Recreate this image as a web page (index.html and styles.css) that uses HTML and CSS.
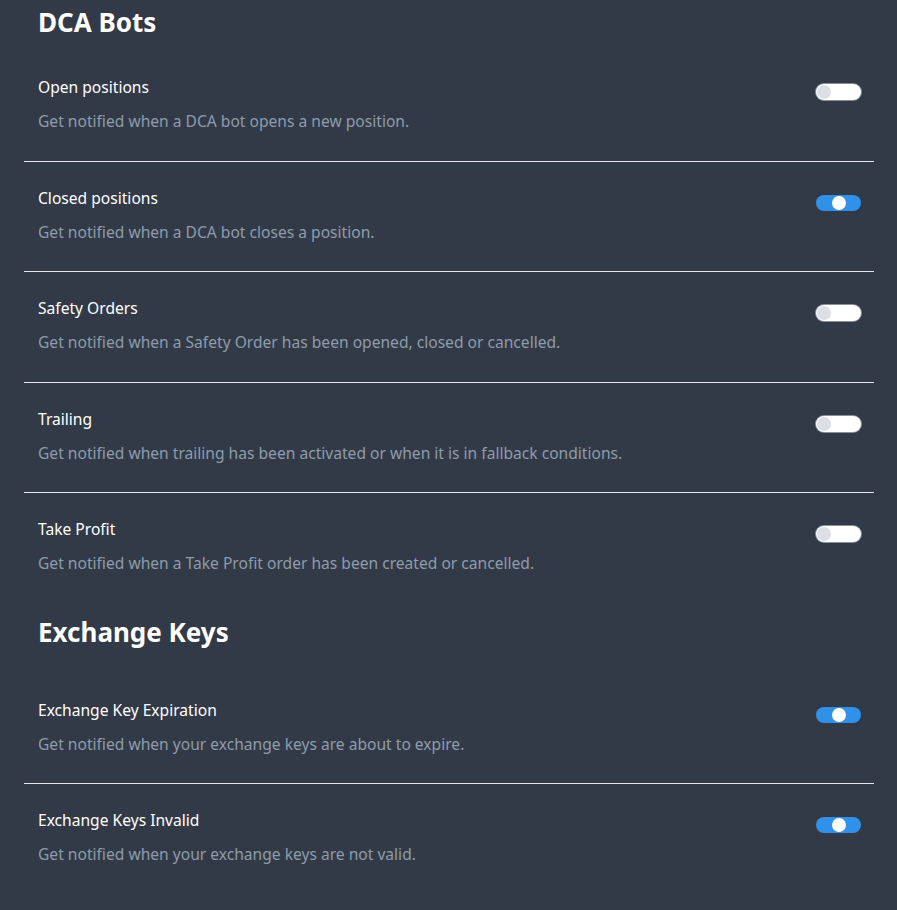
FILE: index.html
```html
<!DOCTYPE html>
<html lang="en">
<head>
    <meta charset="UTF-8">
    <meta name="viewport" content="width=device-width, initial-scale=1.0">
    <title>Notification Settings</title>
    <link rel="stylesheet" href="styles.css">
</head>
<body>

    <div id="settings">

        <!-- DCA Bots -->
        <section class="section">
            <h2 class="section-title">DCA Bots</h2>
            <div class="setting">
                <div class="setting-text">
                    <div class="setting-name">Open positions</div>
                    <div class="setting-desc">Get notified when a DCA bot opens a new position.</div>
                </div>
                <span class="toggle"><span class="knob"></span></span>
            </div>
            <div class="setting">
                <div class="setting-text">
                    <div class="setting-name">Closed positions</div>
                    <div class="setting-desc">Get notified when a DCA bot closes a position.</div>
                </div>
                <span class="toggle on"><span class="knob"></span></span>
            </div>
            <div class="setting">
                <div class="setting-text">
                    <div class="setting-name">Safety Orders</div>
                    <div class="setting-desc">Get notified when a Safety Order has been opened, closed or cancelled.</div>
                </div>
                <span class="toggle"><span class="knob"></span></span>
            </div>
            <div class="setting">
                <div class="setting-text">
                    <div class="setting-name">Trailing</div>
                    <div class="setting-desc">Get notified when trailing has been activated or when it is in fallback conditions.</div>
                </div>
                <span class="toggle"><span class="knob"></span></span>
            </div>
            <div class="setting">
                <div class="setting-text">
                    <div class="setting-name">Take Profit</div>
                    <div class="setting-desc">Get notified when a Take Profit order has been created or cancelled.</div>
                </div>
                <span class="toggle"><span class="knob"></span></span>
            </div>
        </section>

        <!-- Exchange Keys -->
        <section class="section section-keys">
            <h2 class="section-title">Exchange Keys</h2>
            <div class="setting">
                <div class="setting-text">
                    <div class="setting-name">Exchange Key Expiration</div>
                    <div class="setting-desc">Get notified when your exchange keys are about to expire.</div>
                </div>
                <span class="toggle on"><span class="knob"></span></span>
            </div>
            <div class="setting">
                <div class="setting-text">
                    <div class="setting-name">Exchange Keys Invalid</div>
                    <div class="setting-desc">Get notified when your exchange keys are not valid.</div>
                </div>
                <span class="toggle on"><span class="knob"></span></span>
            </div>
        </section>

    </div>

</body>
</html>
```

FILE: styles.css
```css
/* General Styles */
body, html {
    margin: 0;
    padding: 0;
    background: #333a47;
    font-family: 'Noto Sans', 'Open Sans', sans-serif;
    color: #ffffff;
}

/* Page Container */
#settings {
    padding: 0 23px 0 24px;
}

/* Section Headings */
.section-title {
    margin: 0;
    padding: 5px 14px 12px;
    font-size: 26px;
    line-height: 34px;
    font-weight: bold;
}

.section-keys .section-title {
    padding-top: 12px;
    padding-bottom: 25px;
}

/* Setting Rows */
.setting {
    display: flex;
    justify-content: space-between;
    align-items: flex-start;
    padding: 25px 13px 28.5px 14px;
    border-bottom: 1px solid #e4e6ea;
}

.setting:last-child {
    border-bottom: none;
}

.setting-name {
    font-size: 15.6px;
    line-height: 22px;
}

.setting-desc {
    margin-top: 12px;
    font-size: 15.6px;
    line-height: 22px;
    color: #8d9cab;
}

/* Toggle Switch */
.toggle {
    position: relative;
    width: 45px;
    height: 16px;
    margin-top: 8px;
    border-radius: 9px;
    background: #ffffff;
    box-shadow: 0 0 0 1px #8a909c;
    flex-shrink: 0;
}

.toggle .knob {
    position: absolute;
    top: 1px;
    left: 1px;
    width: 14px;
    height: 14px;
    border-radius: 50%;
    background: #dcdfe5;
}

.toggle.on {
    background: #3190e8;
    box-shadow: none;
}

.toggle.on .knob {
    left: 16px;
    background: #ffffff;
}
```
